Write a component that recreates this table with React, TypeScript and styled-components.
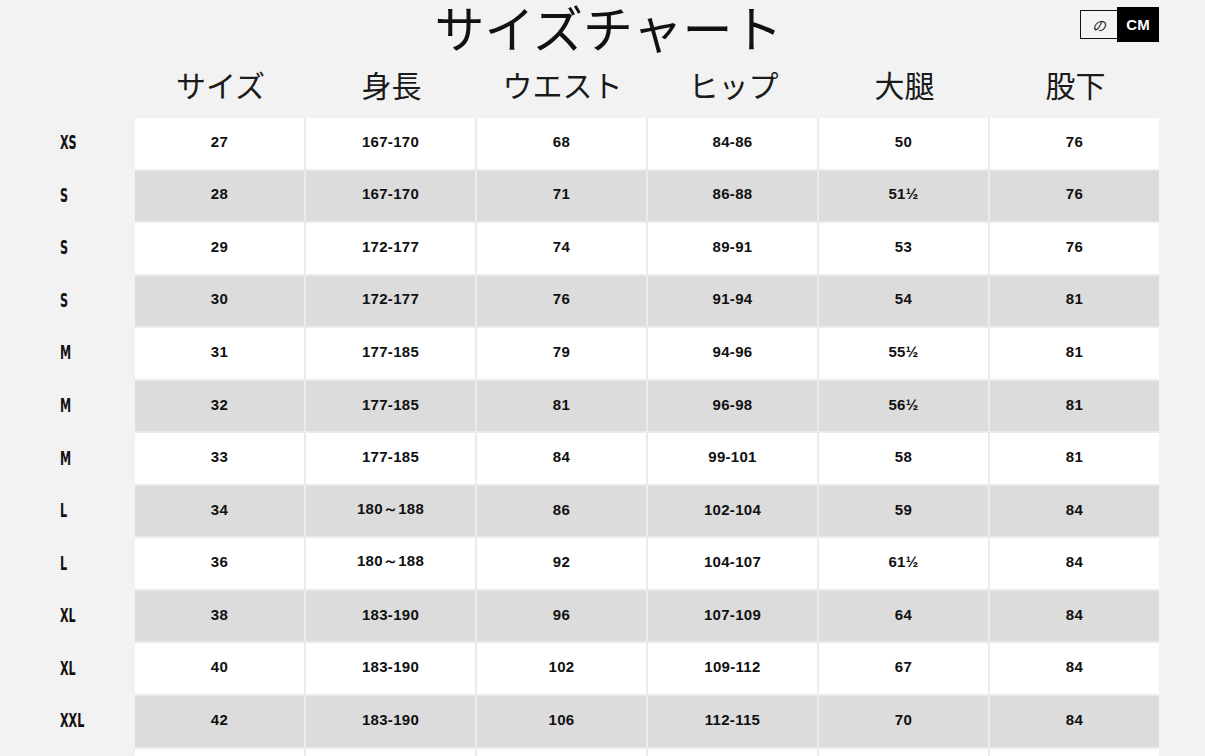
import styled, { createGlobalStyle } from "styled-components";

const GlobalStyle = createGlobalStyle`
  html, body {
    margin: 0;
    padding: 0;
    background: #f2f2f2;
    font-family: "Noto Sans CJK JP", "Noto Sans", sans-serif;
    color: #111;
  }
`;

const columns = ["サイズ", "身長", "ウエスト", "ヒップ", "大腿", "股下"];

const rows: [string, string[]][] = [
  ["XS", ["27", "167-170", "68", "84-86", "50", "76"]],
  ["S", ["28", "167-170", "71", "86-88", "51½", "76"]],
  ["S", ["29", "172-177", "74", "89-91", "53", "76"]],
  ["S", ["30", "172-177", "76", "91-94", "54", "81"]],
  ["M", ["31", "177-185", "79", "94-96", "55½", "81"]],
  ["M", ["32", "177-185", "81", "96-98", "56½", "81"]],
  ["M", ["33", "177-185", "84", "99-101", "58", "81"]],
  ["L", ["34", "180～188", "86", "102-104", "59", "84"]],
  ["L", ["36", "180～188", "92", "104-107", "61½", "84"]],
  ["XL", ["38", "183-190", "96", "107-109", "64", "84"]],
  ["XL", ["40", "183-190", "102", "109-112", "67", "84"]],
  ["XXL", ["42", "183-190", "106", "112-115", "70", "84"]],
  // next row only peeks in at the bottom edge
  ["", ["", "", "", "", "", ""]],
];

export default function App() {
  return (
    <Page>
      <GlobalStyle />
      <TitleBar>
        <span />
        <Title>サイズチャート</Title>
        <UnitToggle>
          <UnitButton>の</UnitButton>
          <UnitButton active>CM</UnitButton>
        </UnitToggle>
      </TitleBar>

      <Chart>
        <HeadRow>
          <span />
          {columns.map((c) => (
            <HeadCell key={c}>{c}</HeadCell>
          ))}
        </HeadRow>
        {rows.map(([label, values], i) => (
          <Row key={i}>
            <SizeLabel>
              <span>{label}</span>
            </SizeLabel>
            <Cells>
              {values.map((v, j) => (
                <Cell key={j} shaded={i % 2 === 1}>
                  {v}
                </Cell>
              ))}
            </Cells>
          </Row>
        ))}
      </Chart>
    </Page>
  );
}

const Page = styled.div`
  width: 1205px;
  height: 756px;
  overflow: hidden;
`;

const TitleBar = styled.div`
  display: grid;
  grid-template-columns: 1fr auto 1fr;
  align-items: start;
  height: 56px;
`;

const Title = styled.h1`
  margin: 0 0 0 12px;
  font-size: 50px;
  font-weight: 400;
  line-height: 1.04;
`;

const UnitToggle = styled.div`
  justify-self: end;
  margin: 7px 46px 0 0;
  display: flex;
  align-items: center;
`;

const UnitButton = styled.div<{ active?: boolean }>`
  display: flex;
  align-items: center;
  justify-content: center;
  box-sizing: border-box;
  width: ${(p) => (p.active ? "42px" : "37px")};
  height: ${(p) => (p.active ? "35px" : "29px")};
  background: ${(p) => (p.active ? "#000" : "#f4f4f4")};
  color: ${(p) => (p.active ? "#fff" : "#222")};
  border: ${(p) => (p.active ? "none" : "1px solid #111")};
  border-right: none;
  font-family: ${(p) =>
    p.active ? '"Liberation Sans", sans-serif' : '"Noto Sans CJK JP", sans-serif'};
  font-style: ${(p) => (p.active ? "normal" : "italic")};
  font-weight: ${(p) => (p.active ? 700 : 400)};
  font-size: ${(p) => (p.active ? "15px" : "14px")};
`;

const Chart = styled.div`
  display: flex;
  flex-direction: column;
`;

const HeadRow = styled.div`
  display: grid;
  grid-template-columns: 135px repeat(6, 171px);
  height: 62px;
`;

const HeadCell = styled.div`
  text-align: center;
  font-size: 30px;
  line-height: 1;
  padding-top: 13px;
  color: #1a1a1a;
`;

const Row = styled.div`
  display: grid;
  grid-template-columns: 135px 1024px;
  height: 52.55px;
`;

const SizeLabel = styled.div`
  display: flex;
  align-items: center;
  padding: 0 0 4px 60px;
  font-family: "Liberation Sans Narrow", "DejaVu Sans Condensed", sans-serif;
  font-weight: 700;
  font-size: 20px;

  span {
    display: inline-block;
    transform: scaleX(0.62);
    transform-origin: left center;
  }
`;

const Cells = styled.div`
  display: grid;
  grid-template-columns: repeat(6, 1fr);
  gap: 2px;
  padding-bottom: 2px;
  background: #ebebeb;
  box-sizing: border-box;
`;

const Cell = styled.div<{ shaded: boolean }>`
  display: flex;
  align-items: center;
  justify-content: center;
  padding-bottom: 4px;
  background: ${(p) => (p.shaded ? "#dcdcdc" : "#ffffff")};
  font-family: "Liberation Sans", "DejaVu Sans", sans-serif;
  font-weight: 700;
  font-size: 15px;
  letter-spacing: 0.3px;
  color: #111;
`;
